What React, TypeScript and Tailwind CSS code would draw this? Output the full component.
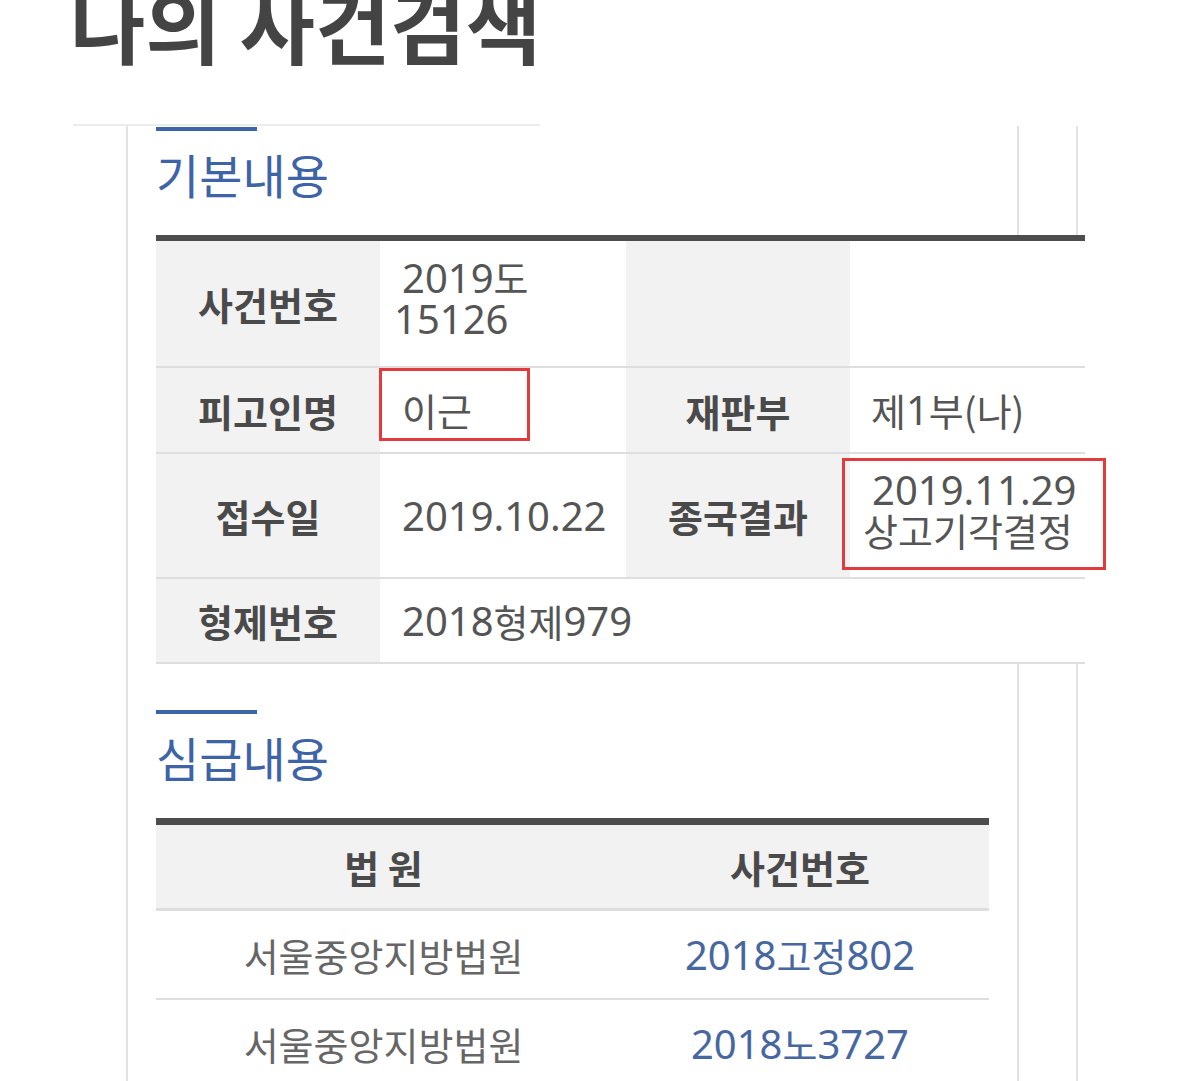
import React from 'react';

// digits use a latin face a bit larger than the hangul, like the phone font in the capture
function Mixed({ text }: { text: string }) {
  const parts = text.split(/([0-9.]+)/).filter((p) => p !== '');
  return (
    <>
      {parts.map((part, i) =>
        /[0-9]/.test(part) ? (
          <span key={i} className="font-['Noto_Sans','Noto_Sans_CJK_KR',sans-serif] text-[40px]">
            {part}
          </span>
        ) : (
          <span key={i}>{part}</span>
        ),
      )}
    </>
  );
}

function SectionTitle({ title }: { title: string }) {
  return (
    <>
      <div className="w-[101px] h-[4px] bg-[#3d66a8]" />
      <h2 className="mt-[19px] text-[47px] leading-none font-normal text-[#3d64a6]">{title}</h2>
    </>
  );
}

const labelCell =
  'flex items-center justify-center bg-[#f2f2f2] text-[38px] font-bold text-[#4a4a4a]';
const valueCell = 'flex bg-white text-[38px] text-[#555555] leading-[40px]';

export default function App() {
  const lowerCourts = [
    { court: '서울중앙지방법원', caseNo: '2018고정802' },
    { court: '서울중앙지방법원', caseNo: '2018노3727' },
  ];

  return (
    <div className="h-[1081px] overflow-hidden bg-white font-['Noto_Sans_CJK_KR',sans-serif]">
      <h1 className="ml-[70px] mt-[-18px] text-[82px] leading-none font-bold text-[#444444]">
        나의 사건검색
      </h1>
      <div className="ml-[73px] mt-[60px] w-[467px] h-[2px] bg-[#ececec]" />

      <div className="ml-[126px] w-[952px] h-[1000px] border-l-2 border-r-2 border-[#e2e2e2]">
        <div className="w-[891px] h-full border-r-2 border-[#e2e2e2] pl-[28px] pt-[1px]">
          <SectionTitle title="기본내용" />

          <div className="mt-[38px] w-[929px] border-t-[6px] border-[#4d4d4d]">
            <div className="grid grid-cols-[224px_246px_224px_235px] h-[127px] border-b-2 border-[#dedede]">
              <div className={labelCell}>사건번호</div>
              <div className={valueCell + ' flex-col justify-center pl-[14px] pb-[12px]'}>
                <div className="pl-[8px]">
                  <Mixed text="2019도" />
                </div>
                <div>
                  <Mixed text="15126" />
                </div>
              </div>
              <div className="bg-[#f2f2f2]" />
              <div className="bg-white" />
            </div>

            <div className="grid grid-cols-[224px_246px_224px_235px] h-[86px] border-b-2 border-[#dedede]">
              <div className={labelCell}>피고인명</div>
              <div className={valueCell + ' relative items-center pl-[22px]'}>
                이근
                <div className="absolute left-[-1px] top-0 w-[151px] h-[73px] border-[3px] border-[#e23b3b]" />
              </div>
              <div className={labelCell}>재판부</div>
              <div className={valueCell + ' items-center pl-[21px]'}>
                <Mixed text="제1부(나)" />
              </div>
            </div>

            <div className="grid grid-cols-[224px_246px_224px_235px] h-[125px] border-b-2 border-[#dedede]">
              <div className={labelCell}>접수일</div>
              <div className={valueCell + ' items-center pl-[22px]'}>
                <Mixed text="2019.10.22" />
              </div>
              <div className={labelCell}>종국결과</div>
              <div className={valueCell + ' relative flex-col justify-center pl-[13px] pb-[12px]'}>
                <div className="pl-[9px]">
                  <Mixed text="2019.11.29" />
                </div>
                <div>상고기각결정</div>
                <div className="absolute left-[-8px] top-[4px] w-[264px] h-[112px] border-[3px] border-[#e23b3b]" />
              </div>
            </div>

            <div className="grid grid-cols-[224px_705px] h-[85px] border-b-2 border-[#dedede]">
              <div className={labelCell}>형제번호</div>
              <div className={valueCell + ' items-center pl-[22px]'}>
                <Mixed text="2018형제979" />
              </div>
            </div>
          </div>

          <div className="mt-[46px]">
            <SectionTitle title="심급내용" />
          </div>

          <div className="mt-[38px] w-[833px] border-t-[7px] border-[#4d4d4d]">
            <div className="grid grid-cols-[455px_378px] h-[86px] bg-[#f2f2f2] border-b-[3px] border-[#dedede] text-[38px] font-bold text-[#4a4a4a]">
              <div className="flex items-center justify-center">법 원</div>
              <div className="flex items-center justify-center">사건번호</div>
            </div>
            {lowerCourts.map((row, i) => (
              <div
                key={`court-${i}`}
                className="grid grid-cols-[455px_378px] h-[89px] bg-white border-b-2 border-[#dedede] text-[38px]"
              >
                <div className="flex items-center justify-center text-[#666666]">{row.court}</div>
                <div className="flex items-center justify-center text-[#4767a0]">
                  <Mixed text={row.caseNo} />
                </div>
              </div>
            ))}
          </div>
        </div>
      </div>
    </div>
  );
}
